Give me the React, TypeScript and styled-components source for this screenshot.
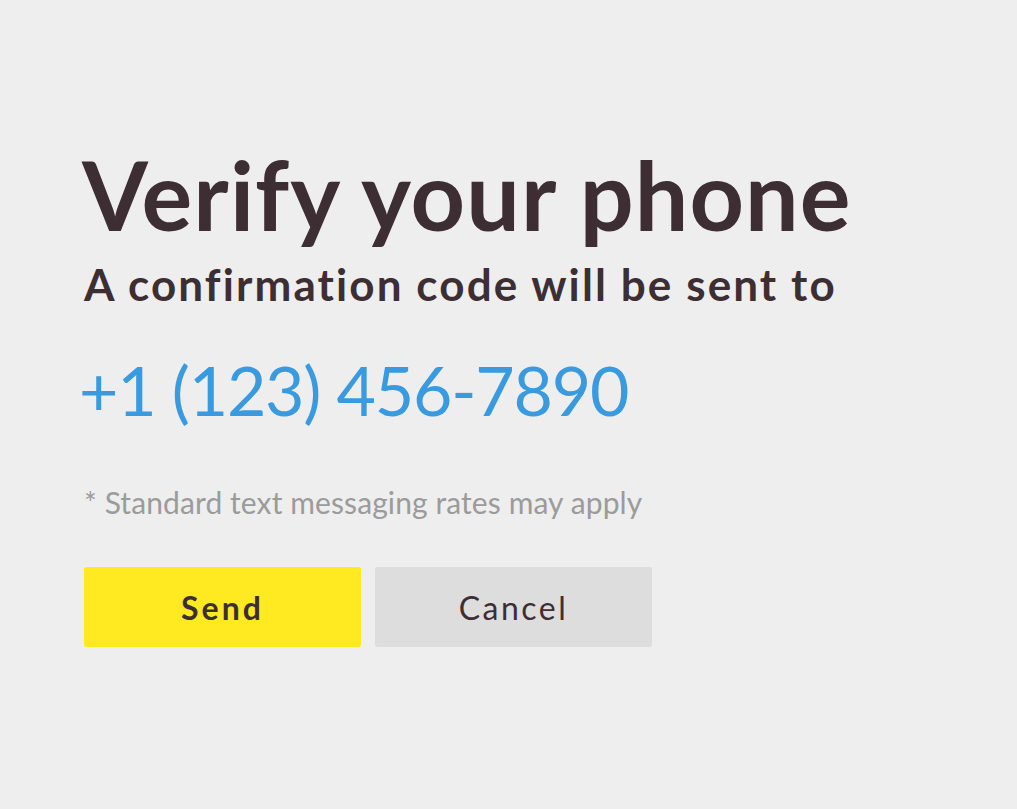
import React from 'react';
import styled, {createGlobalStyle} from 'styled-components';

const GlobalStyle = createGlobalStyle`
  html, body {
    margin: 0;
    padding: 0;
    background: #eeeeee;
  }
  body {
    font-family: Lato, "Open Sans", sans-serif;
    font-variant-ligatures: none;
    color: #3d2e33;
  }
`;

const Page = styled.div`
  min-height: 809px;
  padding: 147px 0 0 82px;
  box-sizing: border-box;
`;

const Title = styled.h1`
  margin: 0;
  font-size: 95px;
  line-height: 1;
  font-weight: 700;
  letter-spacing: 1.1px;
  color: #3d2e33;
`;

const Subtitle = styled.h2`
  margin: 20px 0 0 2px;
  font-size: 44px;
  line-height: 1;
  font-weight: 700;
  letter-spacing: 2.1px;
  color: #3d2e33;
`;

const Phone = styled.div`
  margin: 50px 0 0 -3px;
  font-size: 68px;
  line-height: 1;
  font-weight: 400;
  letter-spacing: -1.2px;
  color: #3a9ae0;
`;

const Note = styled.p`
  margin: 63px 0 0 2px;
  font-size: 30px;
  line-height: 1;
  letter-spacing: 0.1px;
  color: #9b9b9b;
`;

const Actions = styled.div`
  display: flex;
  gap: 14px;
  margin: 50px 0 0 2px;
`;

const ActionButton = styled.button<{$primary?: boolean}>`
  width: 277px;
  height: 80px;
  border: none;
  border-radius: 2px;
  font-family: inherit;
  font-size: 32px;
  font-weight: ${p => (p.$primary ? 700 : 400)};
  letter-spacing: ${p => (p.$primary ? '3px' : '2.5px')};
  color: #3d2e33;
  background: ${p => (p.$primary ? '#ffea22' : '#dddddd')};
  cursor: pointer;
`;

function App() {
  return (
    <>
      <GlobalStyle />
      <Page>
        <Title>Verify your phone</Title>
        <Subtitle>A confirmation code will be sent to</Subtitle>
        <Phone>+1 (123) 456-7890</Phone>
        <Note>* Standard text messaging rates may apply</Note>
        <Actions>
          <ActionButton $primary>Send</ActionButton>
          <ActionButton>Cancel</ActionButton>
        </Actions>
      </Page>
    </>
  );
}

export default App;
